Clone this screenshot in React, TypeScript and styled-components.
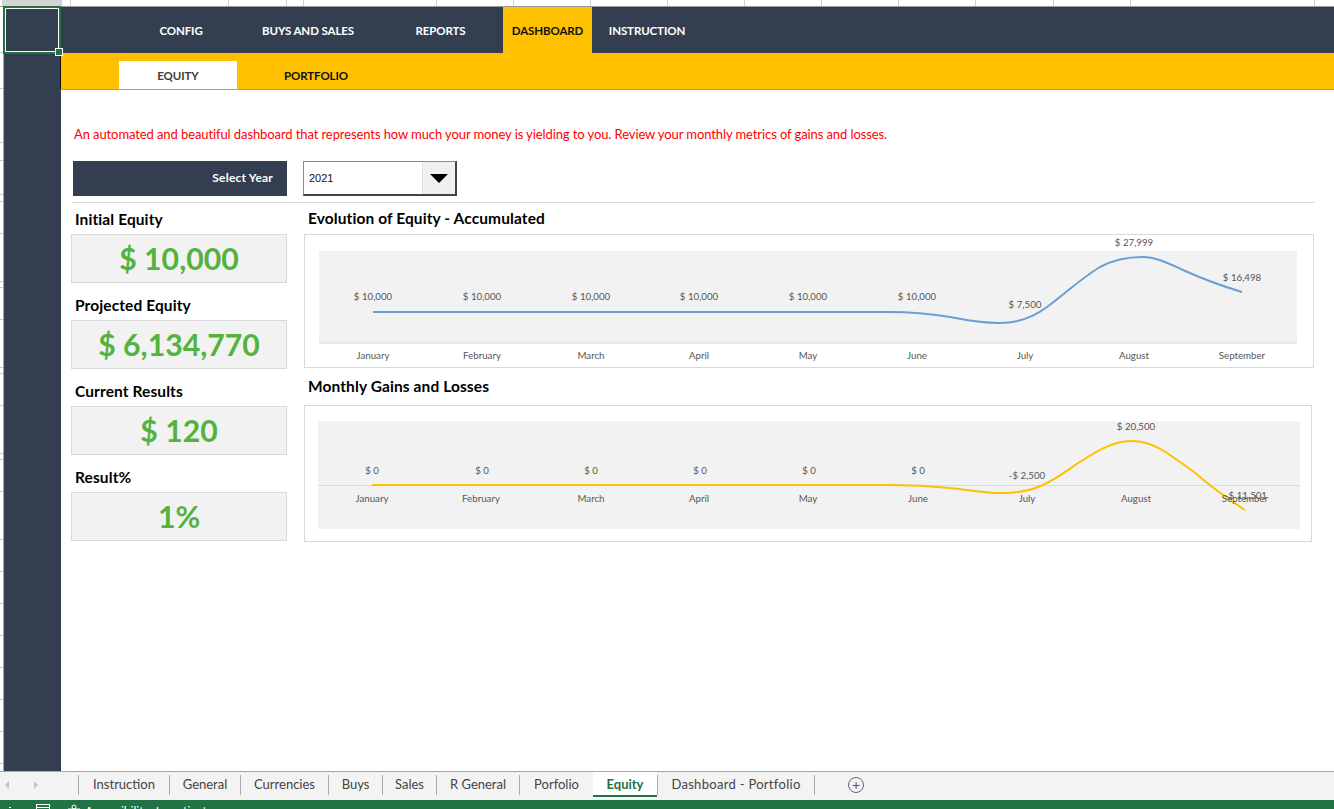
import React from 'react';
import styled, { createGlobalStyle } from 'styled-components';

const dark = '#333f50';
const yellow = '#ffc000';
const font = '"Lato", "Open Sans", sans-serif';

const GlobalStyle = createGlobalStyle`
  html, body { margin: 0; padding: 0; background: #fff; overflow: hidden; }
  * { box-sizing: border-box; }
`;

const Page = styled.div`
  position: relative;
  width: 1334px;
  height: 809px;
  display: flex;
  flex-direction: column;
  font-family: ${font};
  overflow: hidden;
`;

const ColumnHeader = styled.div`
  height: 7px;
  flex: none;
  display: flex;
  background: #fff;
  border-bottom: 1px solid #9c9c9c;
`;

const ColumnCell = styled.div<{ $w: number; $active?: boolean }>`
  width: ${p => p.$w}px;
  flex: none;
  background: ${p => (p.$active ? '#d4d4d4' : '#fff')};
  border-right: 1px solid #d0d0d0;
`;

const Sheet = styled.div`
  flex: 1;
  display: flex;
  min-height: 0;
`;

const RowHeader = styled.div`
  width: 4px;
  flex: none;
  display: flex;
  flex-direction: column;
  background: #fff;
  border-right: 1px solid #a8a8a8;
`;

const RowCell = styled.div<{ $h: number }>`
  height: ${p => p.$h}px;
  flex: none;
  border-bottom: 1px solid #c8c8c8;
`;

const SideColumn = styled.div`
  width: 57px;
  flex: none;
  background: ${dark};
`;

const Main = styled.div`
  flex: 1;
  display: flex;
  flex-direction: column;
  min-width: 0;
`;

const TopNav = styled.nav`
  height: 46px;
  flex: none;
  display: flex;
  padding-left: 58px;
  background: ${dark};
`;

const NavItem = styled.div<{ $w: number; $active?: boolean; $shift?: number }>`
  width: ${p => p.$w}px;
  padding-left: ${p => p.$shift ?? 0}px;
  display: flex;
  align-items: center;
  justify-content: center;
  font-size: 11.5px;
  font-weight: 700;
  letter-spacing: -0.1px;
  color: ${p => (p.$active ? '#111' : '#fff')};
  background: ${p => (p.$active ? yellow : 'transparent')};
`;

const SubNav = styled.div`
  height: 37px;
  flex: none;
  display: flex;
  align-items: flex-end;
  padding-left: 58px;
  background: ${yellow};
  border-left: 1px solid #111;
  border-bottom: 1px solid #a0a0a0;
  margin-left: -1px;
`;

const SubItem = styled.div<{ $w: number; $active?: boolean }>`
  width: ${p => p.$w}px;
  height: 28px;
  display: flex;
  align-items: center;
  justify-content: center;
  font-size: 11.5px;
  font-weight: 700;
  letter-spacing: -0.1px;
  color: ${p => (p.$active ? '#404040' : '#111')};
  background: ${p => (p.$active ? '#fff' : 'transparent')};
`;

const Body = styled.div`
  padding: 0 19px 0 10px;
`;

const Note = styled.p`
  margin: 0;
  height: 71px;
  padding: 35px 0 0 3px;
  font-size: 13px;
  line-height: 18px;
  letter-spacing: -0.095px;
  color: #ff0000;
`;

const YearRow = styled.div`
  display: flex;
  gap: 16px;
  padding-left: 2px;
`;

const YearLabel = styled.div`
  width: 214px;
  height: 35px;
  display: flex;
  align-items: center;
  justify-content: flex-end;
  padding: 0 14px 2px 0;
  background: ${dark};
  color: #fff;
  font-size: 12px;
  font-weight: 700;
  letter-spacing: 0.2px;
`;

const YearSelect = styled.div`
  width: 154px;
  height: 35px;
  display: flex;
  align-items: center;
  justify-content: space-between;
  padding-left: 5px;
  background: #fff;
  border: 1px solid #8a8a8a;
  border-right: 2px solid #444;
  border-bottom: 2px solid #444;
  font-family: "Liberation Sans", sans-serif;
  font-size: 11px;
  color: #111;
`;

const SelectButton = styled.div`
  width: 33px;
  height: 100%;
  display: flex;
  align-items: center;
  justify-content: center;
  background: #f0f0f0;
  border-left: 1px solid #e0e0e0;
`;

const Arrow = styled.span`
  width: 0;
  height: 0;
  border-left: 9px solid transparent;
  border-right: 9px solid transparent;
  border-top: 9px solid #000;
`;

const Divider = styled.div`
  height: 1px;
  margin: 6px 0 0 1px;
  background: #d9d9d9;
`;

const Dashboard = styled.div`
  display: grid;
  grid-template-columns: 216px 1010px;
  column-gap: 17px;
`;

const StatColumn = styled.div`
  display: flex;
  flex-direction: column;
  gap: 12px;
  padding-top: 6px;
`;

const Stat = styled.div`
  display: flex;
  flex-direction: column;
`;

const StatLabel = styled.div`
  height: 25px;
  padding: 0 0 5px 4px;
  font-size: 15.5px;
  line-height: 20px;
  font-weight: 700;
  letter-spacing: 0.1px;
  color: #000;
`;

const StatValue = styled.div`
  height: 49px;
  display: flex;
  align-items: center;
  justify-content: center;
  padding-bottom: 2px;
  background: #f2f2f2;
  border: 1px solid #d9d9d9;
  font-size: 30.2px;
  font-weight: 700;
  color: #54b23e;
`;

const ChartColumn = styled.div`
  display: flex;
  flex-direction: column;
`;

const ChartTitle = styled.div<{ $h: number }>`
  height: ${p => p.$h}px;
  padding: 0 0 2px 4px;
  display: flex;
  align-items: center;
  font-size: 15.5px;
  font-weight: 700;
  letter-spacing: 0.1px;
  color: #000;
`;

const ChartCard = styled.div<{ $w: number; $h: number }>`
  width: ${p => p.$w}px;
  height: ${p => p.$h}px;
  border: 1px solid #d9d9d9;
  background: #fff;

  svg { display: block; }
  text {
    font-family: ${font};
    font-size: 9.7px;
    fill: #555;
    text-anchor: middle;
  }
`;

const TabBar = styled.div`
  height: 29px;
  flex: none;
  display: flex;
  align-items: flex-start;
  background: #f3f3f3;
  border-top: 1px solid #a6a6a6;
`;

const TabArrows = styled.div`
  width: 78px;
  height: 24px;
  display: flex;
  align-items: center;
  gap: 25px;
  padding: 2px 0 0 5px;
`;

const TabArrow = styled.span<{ $right?: boolean }>`
  width: 0;
  height: 0;
  border-top: 4px solid transparent;
  border-bottom: 4px solid transparent;
  border-left: ${p => (p.$right ? '4px solid #c4c4c4' : 'none')};
  border-right: ${p => (p.$right ? 'none' : '4px solid #c4c4c4')};
`;

const Tab = styled.div<{ $w: number; $active?: boolean; $spacing?: number }>`
  width: ${p => p.$w}px;
  margin-top: ${p => (p.$active ? 0 : 3)}px;
  height: ${p => (p.$active ? 25 : 20)}px;
  padding: ${p => (p.$active ? '0' : '0 0 2px')};
  display: flex;
  align-items: center;
  justify-content: center;
  flex: none;
  font-size: 13px;
  letter-spacing: ${p => p.$spacing ?? 0}px;
  font-weight: ${p => (p.$active ? 700 : 400)};
  color: ${p => (p.$active ? '#217346' : '#444')};
  background: ${p => (p.$active ? '#fff' : 'transparent')};
  border-left: ${p => (p.$active ? 'none' : '1px solid #ababab')};
  border-bottom: ${p => (p.$active ? '2px solid #217346' : 'none')};
`;

const TabEnd = styled.div`
  width: 1px;
  height: 20px;
  margin: 3px 33px 0 0;
  background: #ababab;
`;

const AddSheet = styled.div`
  width: 16px;
  height: 16px;
  margin-top: 5px;
  display: flex;
  align-items: center;
  justify-content: center;
  border: 1px solid #666;
  border-radius: 50%;
  color: #555;
  font-size: 14px;
  line-height: 12px;
`;

const StatusBar = styled.div`
  height: 9px;
  flex: none;
  display: flex;
  align-items: flex-start;
  overflow: hidden;
  background: #217346;
  color: #fff;
  font-size: 12px;
  line-height: 14px;
`;

const StatusDot = styled.span`
  width: 2px;
  height: 1px;
  margin: 7px 25px 0 9px;
  background: #fff;
`;

const StatusIcon = styled.svg<{ $gap?: number }>`
  flex: none;
  margin: 4px 0 0 ${p => p.$gap ?? 0}px;
`;

const StatusText = styled.span`
  margin: 4px 0 0 4px;
`;

const SelectionBox = styled.div`
  position: absolute;
  left: 3px;
  top: 6px;
  width: 58px;
  height: 48px;
  border: 2px solid #217346;
  box-shadow: inset 0 0 0 1px #fff;

  &::after {
    content: '';
    position: absolute;
    right: -4px;
    bottom: -4px;
    width: 6px;
    height: 6px;
    background: #217346;
    border: 1px solid #fff;
  }
`;

const columns = [3, 59, 9, 158, 58, 17, 133, 77, 77, 77, 77, 77, 77, 77, 78, 77, 184, 77, 19];
const rows = [46, 36, 54, 18, 34, 7, 32, 48, 6, 32, 48, 6, 32, 48, 6, 32, 48, 32, 32, 32, 32, 32, 32, 32, 32];
const navItems = [
  { label: 'CONFIG', w: 124 },
  { label: 'BUYS AND SALES', w: 130 },
  { label: 'REPORTS', w: 130, shift: 5 },
  { label: 'DASHBOARD', w: 89, active: true },
  { label: 'INSTRUCTION', w: 110 },
];
const stats = [
  { label: 'Initial Equity', value: '$ 10,000' },
  { label: 'Projected Equity', value: '$ 6,134,770' },
  { label: 'Current Results', value: '$ 120' },
  { label: 'Result%', value: '1%' },
];
const tabs = [
  { label: 'Instruction', w: 91 },
  { label: 'General', w: 71 },
  { label: 'Currencies', w: 88 },
  { label: 'Buys', w: 54 },
  { label: 'Sales', w: 54 },
  { label: 'R General', w: 83 },
  { label: 'Porfolio', w: 74 },
  { label: 'Equity', w: 64, active: true },
  { label: 'Dashboard - Portfolio', w: 157, spacing: 0.3 },
];
const months = ['January', 'February', 'March', 'April', 'May', 'June', 'July', 'August', 'September'];

// label positions are in screen coordinates, the viewBox starts at the card corner
const equityValues: [string, number, number][] = [
  ['$ 10,000', 373, 300], ['$ 10,000', 482, 300], ['$ 10,000', 591, 300],
  ['$ 10,000', 699, 300], ['$ 10,000', 808, 300], ['$ 10,000', 917, 300],
  ['$ 7,500', 1025, 308], ['$ 27,999', 1134, 246], ['$ 16,498', 1242, 281],
];
const equityMonths = [373, 482, 591, 699, 808, 917, 1025, 1134, 1242];

const gainValues: [string, number, number][] = [
  ['$ 0', 372, 474], ['$ 0', 482, 474], ['$ 0', 591, 474],
  ['$ 0', 700, 474], ['$ 0', 809, 474], ['$ 0', 918, 474],
  ['-$ 2,500', 1027, 479], ['$ 20,500', 1136, 430], ['-$ 11,501', 1246, 499],
];
const gainMonths = [372, 481, 591, 699, 808, 918, 1027, 1136, 1245];

const EquityChart: React.FC = () => (
  <svg width="1008" height="132" viewBox="305 235 1008 132">
    <rect x="319" y="251" width="978" height="92" fill="#f2f2f2" />
    <line x1="319" y1="343" x2="1297" y2="343" stroke="#d9d9d9" />
    <path
      d="M373 312 H890 C905 312 925 313 950 317 C965 320 985 323 1000 323 C1020 323 1035 316 1047 307 C1065 294 1080 279 1100 267 C1115 259 1128 257 1142 257 C1157 257 1170 264 1183 270 C1205 280 1222 286 1242 292"
      fill="none"
      stroke="#6a9fd6"
      strokeWidth="2"
    />
    {equityValues.map(([text, x, y], i) => (
      <text key={i} x={x} y={y}>{text}</text>
    ))}
    {months.map((m, i) => (
      <text key={m} x={equityMonths[i]} y={359}>{m}</text>
    ))}
  </svg>
);

const GainsChart: React.FC = () => (
  <svg width="1006" height="135" viewBox="305 406 1006 135">
    <rect x="318" y="421" width="982" height="108" fill="#f2f2f2" />
    <line x1="318" y1="485.5" x2="1300" y2="485.5" stroke="#d9d9d9" />
    <path
      d="M372 485 H890 C905 485 930 486 950 488 C970 490 985 493 1003 493 C1015 493 1030 491 1043 485 C1058 478 1070 468 1083 460 C1100 449 1115 441 1132 441 C1145 441 1155 445 1167 453 C1178 461 1190 468 1200 477 C1215 490 1230 500 1245 510"
      fill="none"
      stroke="#ffc000"
      strokeWidth="2"
    />
    {gainValues.map(([text, x, y], i) => (
      <text key={i} x={x} y={y}>{text}</text>
    ))}
    {months.map((m, i) => (
      <text key={m} x={gainMonths[i]} y={502}>{m}</text>
    ))}
  </svg>
);

const App: React.FC = () => (
  <Page>
    <GlobalStyle />
    <ColumnHeader>
      {columns.map((w, i) => (
        <ColumnCell key={i} $w={w} $active={i === 1} />
      ))}
    </ColumnHeader>
    <Sheet>
      <RowHeader>
        {rows.map((h, i) => (
          <RowCell key={i} $h={h} />
        ))}
      </RowHeader>
      <SideColumn />
      <Main>
        <TopNav>
          {navItems.map(item => (
            <NavItem key={item.label} $w={item.w} $active={item.active} $shift={item.shift}>
              {item.label}
            </NavItem>
          ))}
        </TopNav>
        <SubNav>
          <SubItem $w={118} $active>EQUITY</SubItem>
          <SubItem $w={158}>PORTFOLIO</SubItem>
        </SubNav>
        <Body>
          <Note>
            An automated and beautiful dashboard that represents how much your money is yielding to you. Review your monthly metrics of gains and losses.
          </Note>
          <YearRow>
            <YearLabel>Select Year</YearLabel>
            <YearSelect>
              2021
              <SelectButton><Arrow /></SelectButton>
            </YearSelect>
          </YearRow>
          <Divider />
          <Dashboard>
            <StatColumn>
              {stats.map(stat => (
                <Stat key={stat.label}>
                  <StatLabel>{stat.label}</StatLabel>
                  <StatValue>{stat.value}</StatValue>
                </Stat>
              ))}
            </StatColumn>
            <ChartColumn>
              <ChartTitle $h={31}>Evolution of Equity - Accumulated</ChartTitle>
              <ChartCard $w={1010} $h={134}><EquityChart /></ChartCard>
              <ChartTitle $h={37}>Monthly Gains and Losses</ChartTitle>
              <ChartCard $w={1008} $h={137}><GainsChart /></ChartCard>
            </ChartColumn>
          </Dashboard>
        </Body>
      </Main>
    </Sheet>
    <TabBar>
      <TabArrows>
        <TabArrow />
        <TabArrow $right />
      </TabArrows>
      {tabs.map(tab => (
        <Tab key={tab.label} $w={tab.w} $active={tab.active} $spacing={tab.spacing}>{tab.label}</Tab>
      ))}
      <TabEnd />
      <AddSheet>+</AddSheet>
    </TabBar>
    <StatusBar>
      <StatusDot />
      <StatusIcon width="14" height="12" viewBox="0 0 14 12">
        <rect x="0.5" y="0.5" width="13" height="11" fill="none" stroke="#fff" />
        <path d="M1 3.5H13M3 6H6M8 6H11" stroke="#fff" />
      </StatusIcon>
      <StatusIcon $gap={17} width="14" height="12" viewBox="0 0 14 12">
        <circle cx="7" cy="3" r="2" fill="none" stroke="#fff" />
        <path d="M1 5H13M7 5V10" stroke="#fff" />
      </StatusIcon>
      <StatusText>Accessibility: Investigate</StatusText>
    </StatusBar>
    <SelectionBox />
  </Page>
);

export default App;
